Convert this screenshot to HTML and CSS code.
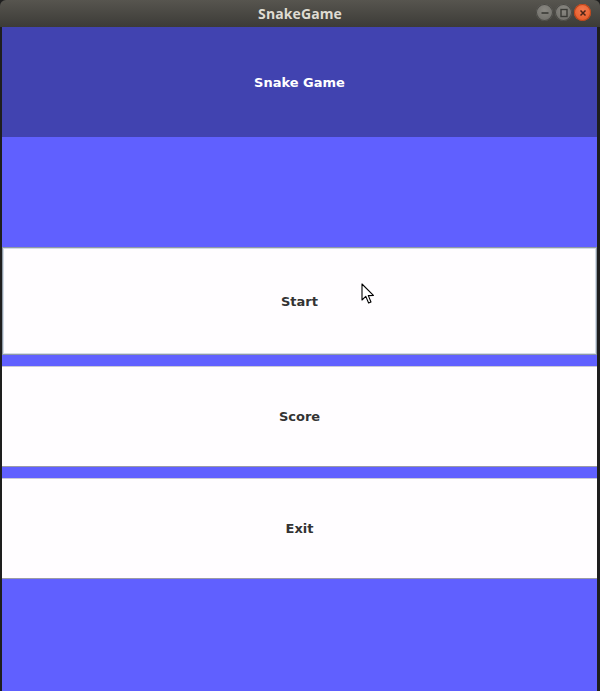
FILE: index.html
```html
<!DOCTYPE html>
<html>
<head>
<meta charset="utf-8">
<link rel="stylesheet" href="styles.css">
</head>
<body>
<div class="window">
  <div class="titlebar">
    <span class="title">SnakeGame</span>
    <div class="controls">
      <span class="ctl ctl-min"><svg width="16" height="16" viewBox="0 0 16 16"><line x1="4.5" y1="8" x2="11.5" y2="8" stroke="#3a3a36" stroke-width="1.6"/></svg></span>
      <span class="ctl ctl-max"><svg width="16" height="16" viewBox="0 0 16 16"><rect x="5" y="4.5" width="6" height="7" fill="none" stroke="#3a3a36" stroke-width="1.4"/></svg></span>
      <span class="ctl ctl-close"><svg width="16" height="16" viewBox="0 0 16 16"><path d="M5.5 5.5 L10.5 10.5 M10.5 5.5 L5.5 10.5" stroke="#4a2418" stroke-width="1.5"/></svg></span>
    </div>
  </div>
  <div class="content">
    <div class="header">Snake Game</div>
    <div class="spacer"></div>
    <div class="menu">
      <div class="btn btn-focus">Start</div>
      <div class="btn">Score</div>
      <div class="btn">Exit</div>
    </div>
    <div class="filler"></div>
  </div>
</div>
<svg class="cursor" width="14" height="22" viewBox="0 0 14 22"><path d="M1 1 L1 17 L4.8 13.4 L7.6 20 L10 19 L7.3 12.6 L12.4 12.4 Z" fill="#fff" stroke="#000" stroke-width="1.1" stroke-linejoin="round"/></svg>
</body>
</html>
```

FILE: styles.css
```css
html, body {
  margin: 0;
  padding: 0;
  height: 100%;
  background: #1e1e1e;
  overflow: hidden;
}
.window {
  width: 600px;
  height: 691px;
  display: flex;
  flex-direction: column;
  font-family: "DejaVu Sans", "Liberation Sans", sans-serif;
}
.titlebar {
  height: 27px;
  flex: 0 0 27px;
  background: linear-gradient(#57554f, #3c3b37);
  display: flex;
  align-items: center;
  justify-content: center;
  position: relative;
  border-radius: 6px 6px 0 0;
}
.title {
  color: #dfdbd2;
  font-family: "Open Sans", "DejaVu Sans", sans-serif;
  font-weight: 700;
  font-size: 14px;
  letter-spacing: 0.1px;
}
.controls {
  position: absolute;
  right: 9px;
  top: 4px;
  display: flex;
  gap: 2px;
}
.ctl {
  width: 17px;
  height: 17px;
  border-radius: 50%;
  display: flex;
  align-items: center;
  justify-content: center;
}
.ctl-min, .ctl-max {
  background: radial-gradient(circle at 50% 35%, #8a8882, #6a6964);
  box-shadow: inset 0 0 0 1px #4a4945;
}
.ctl-close {
  background: radial-gradient(circle at 50% 35%, #f47a4f, #e2531f);
  box-shadow: inset 0 0 0 1px #b9441a;
}
.content {
  flex: 1;
  display: flex;
  flex-direction: column;
  margin: 0 3px 0 2px;
  background: #6060ff;
}
.header {
  height: 110px;
  flex: 0 0 110px;
  background: #4143b0;
  color: #ffffff;
  font-weight: 700;
  font-size: 13px;
  display: flex;
  align-items: center;
  justify-content: center;
}
.spacer {
  height: 110px;
  flex: 0 0 110px;
}
.menu {
  display: flex;
  flex-direction: column;
  gap: 11px;
}
.btn {
  height: 101px;
  background: #fffdff;
  color: #333333;
  font-weight: 700;
  font-size: 13px;
  display: flex;
  align-items: center;
  justify-content: center;
  box-sizing: border-box;
  border-top: 1px solid #c9c9d8;
  border-bottom: 1px solid #9a9aa6;
}
.btn-focus {
  height: 108px;
  border: 1px solid #8f9aa6;
  box-shadow: inset 0 0 0 1px #d4dbe6;
}
.filler {
  flex: 1;
}
.cursor {
  position: absolute;
  left: 361px;
  top: 283px;
}
```
